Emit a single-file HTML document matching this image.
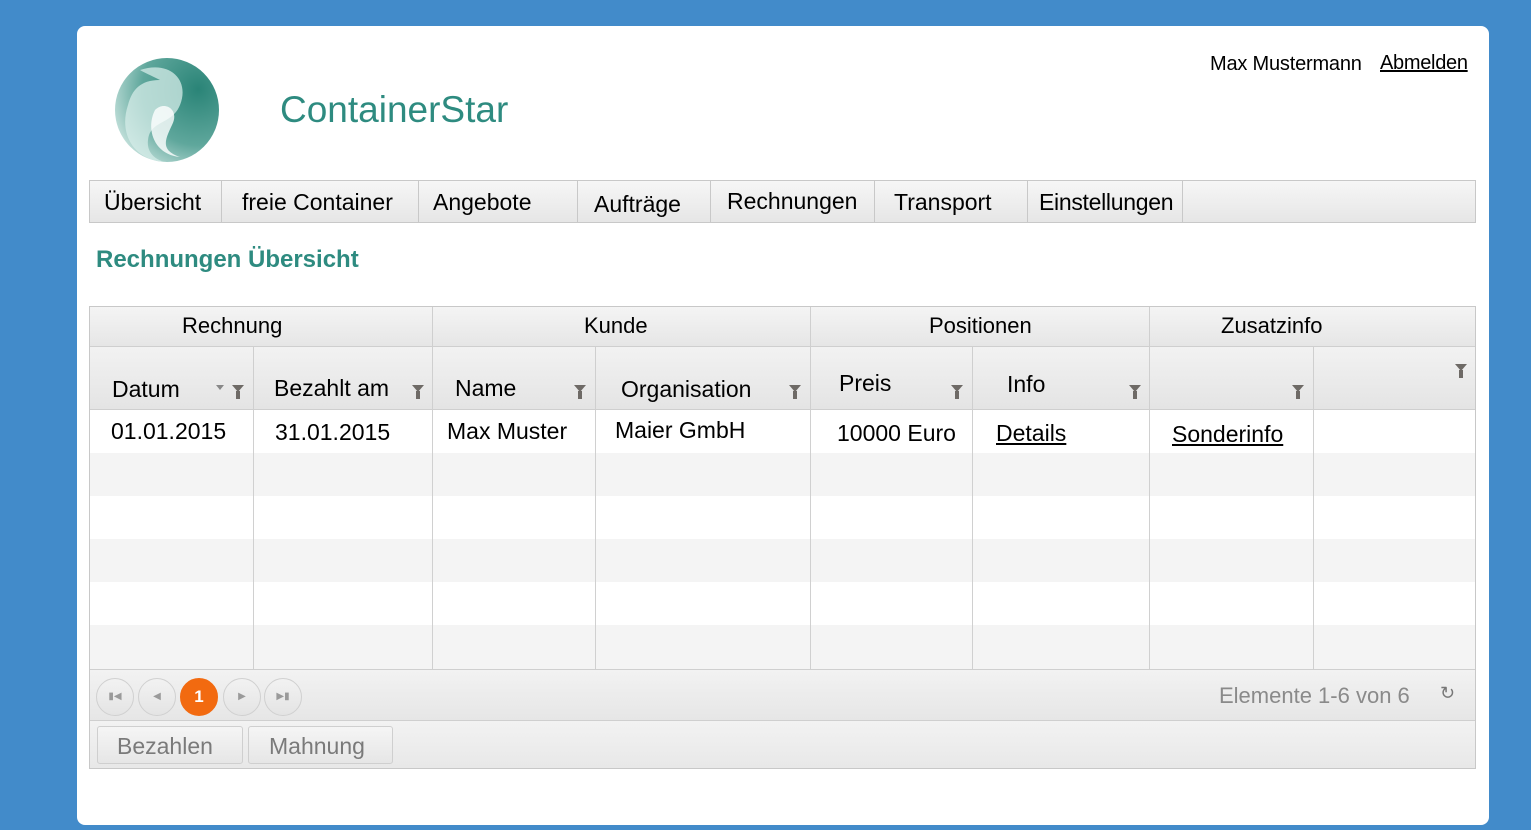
<!DOCTYPE html>
<html><head><meta charset="utf-8"><style>
*{margin:0;padding:0;box-sizing:border-box}
body{width:1531px;height:830px;background:#428bca;font-family:"Liberation Sans",Arial,sans-serif;position:relative;overflow:hidden;color:#000}
.a{position:absolute}
#card{left:77px;top:26px;width:1412px;height:799px;background:#fff;border-radius:8px}
.menu{left:89px;top:180px;width:1387px;height:43px;border:1px solid #c8c8c8;background:linear-gradient(#f6f6f6,#e6e6e6)}
.mi{position:absolute;top:0;height:41px;border-right:1px solid #c8c8c8;font-size:23px;line-height:42px;padding-left:14px}
.grid{left:89px;top:306px;width:1387px;height:463px;border:1px solid #c8c8c8}
.gh{position:absolute;top:0;height:40px;background:linear-gradient(#f4f4f4,#e6e6e6);border-bottom:1px solid #cfcfcf;border-right:1px solid #cfcfcf;font-size:22px;line-height:38px}
.ch{position:absolute;top:40px;height:63px;background:linear-gradient(#f2f2f2,#e4e4e4);border-bottom:1px solid #cfcfcf;border-right:1px solid #cfcfcf;font-size:23px;padding-left:22px}
.row{position:absolute;left:0;width:1385px;height:43px}
.vl{position:absolute;top:103px;width:1px;height:259px;background:#d0d0d0}
.cell{position:absolute;font-size:23px}
.f{position:absolute;width:0;height:0;border-left:6px solid transparent;border-right:6px solid transparent;border-top:7px solid #6e6a66}
.f:after{content:"";position:absolute;left:-2px;top:-1px;width:4px;height:8px;background:#6e6a66}
u{text-decoration:underline}
.pb{position:absolute;top:8px;width:38px;height:38px;border-radius:50%;border:1px solid #d0d0d0;background:linear-gradient(#f2f2f2,#e4e4e4);color:#9a9a9a;font-size:10px;text-align:center;line-height:36px}
.btn{position:absolute;top:5px;height:38px;border:1px solid #cfcfcf;border-radius:3px;background:linear-gradient(#f5f5f5,#e6e6e6);color:#7a7a7a;font-size:23px;line-height:38px}
</style></head><body>
<div id="card" class="a"></div>
<svg class="a" style="left:110px;top:55px" width="115" height="110" viewBox="0 0 115 110">
<defs><radialGradient id="g" cx="0.8" cy="0.3" r="0.9"><stop offset="0" stop-color="#2a8477"/><stop offset="0.6" stop-color="#5fa79c"/><stop offset="1" stop-color="#c9e4df"/></radialGradient></defs>
<circle cx="57" cy="55" r="52" fill="url(#g)"/>
<path d="M30 15 C60 5 80 25 70 50 C62 70 40 65 38 85 C36 100 50 108 60 107 C25 108 8 80 18 50 C22 35 30 25 50 25 C40 20 35 18 30 15Z" fill="#d6ece8" opacity="0.75"/>
<path d="M45 55 C55 45 70 55 62 70 C55 85 50 95 70 102 C45 100 35 75 45 55Z" fill="#fff" opacity="0.8"/>
</svg>
<div class="a" style="left:280px;top:89px;font-size:37px;color:#2e8b80">ContainerStar</div>
<div class="a" style="left:1210px;top:53px;font-size:20px;letter-spacing:-0.2px">Max Mustermann</div>
<div class="a" style="left:1380px;top:52px;font-size:20px;letter-spacing:-0.3px"><u>Abmelden</u></div>
<div class="a menu">
<div class="mi" style="left:0;width:132px">Übersicht</div>
<div class="mi" style="left:132px;width:197px;padding-left:20px">freie Container</div>
<div class="mi" style="left:329px;width:159px">Angebote</div>
<div class="mi" style="left:488px;width:133px;padding-left:16px;line-height:46px">Aufträge</div>
<div class="mi" style="left:621px;width:164px;padding-left:16px;line-height:40px">Rechnungen</div>
<div class="mi" style="left:785px;width:153px;padding-left:19px">Transport</div>
<div class="mi" style="left:938px;width:155px;padding-left:11px;letter-spacing:-0.3px">Einstellungen</div>
</div>
<div class="a" style="left:96px;top:246px;font-size:24px;font-weight:bold;color:#2e8b80">Rechnungen Übersicht</div>
<div class="a grid">
<div class="gh" style="left:0;width:343px;padding-left:92px">Rechnung</div>
<div class="gh" style="left:343px;width:378px;padding-left:151px">Kunde</div>
<div class="gh" style="left:721px;width:339px;padding-left:118px">Positionen</div>
<div class="gh" style="left:1060px;width:325px;border-right:0;padding-left:71px">Zusatzinfo</div>
<div class="ch" style="left:0;width:164px;padding-top:29px">Datum</div>
<div class="ch" style="left:164px;width:179px;padding-left:20px;padding-top:28px">Bezahlt am</div>
<div class="ch" style="left:343px;width:163px;padding-top:28px">Name</div>
<div class="ch" style="left:506px;width:215px;padding-left:25px;padding-top:29px">Organisation</div>
<div class="ch" style="left:721px;width:162px;padding-left:28px;padding-top:23px">Preis</div>
<div class="ch" style="left:883px;width:177px;padding-left:34px;padding-top:24px">Info</div>
<div class="ch" style="left:1060px;width:164px"></div>
<div class="ch" style="left:1224px;width:161px;border-right:0"></div>
<div class="a" style="left:126px;top:78px;width:0;height:0;border-left:4px solid transparent;border-right:4px solid transparent;border-top:5px solid #888"></div>
<div class="f" style="left:142px;top:78px"></div>
<div class="f" style="left:322px;top:78px"></div>
<div class="f" style="left:484px;top:78px"></div>
<div class="f" style="left:699px;top:78px"></div>
<div class="f" style="left:861px;top:78px"></div>
<div class="f" style="left:1039px;top:78px"></div>
<div class="f" style="left:1202px;top:78px"></div>
<div class="f" style="left:1365px;top:57px"></div>
<div class="row" style="top:103px;background:#fff"></div>
<div class="row" style="top:146px;background:#f4f4f4"></div>
<div class="row" style="top:189px;background:#fff"></div>
<div class="row" style="top:232px;background:#f4f4f4"></div>
<div class="row" style="top:275px;background:#fff"></div>
<div class="row" style="top:318px;background:#f4f4f4;height:44px"></div>
<div class="vl" style="left:163px"></div><div class="vl" style="left:342px"></div><div class="vl" style="left:505px"></div><div class="vl" style="left:720px"></div><div class="vl" style="left:882px"></div><div class="vl" style="left:1059px"></div><div class="vl" style="left:1223px"></div>
<div class="cell" style="left:21px;top:111px">01.01.2015</div>
<div class="cell" style="left:185px;top:112px">31.01.2015</div>
<div class="cell" style="left:357px;top:111px">Max Muster</div>
<div class="cell" style="left:525px;top:110px">Maier GmbH</div>
<div class="cell" style="left:747px;top:113px">10000 Euro</div>
<div class="cell" style="left:906px;top:113px"><u>Details</u></div>
<div class="cell" style="left:1082px;top:114px"><u>Sonderinfo</u></div>
<div class="a" style="left:0;top:362px;width:1385px;height:52px;background:linear-gradient(#f2f2f2,#e6e6e6);border-top:1px solid #cfcfcf;border-bottom:1px solid #cfcfcf">
<div class="pb" style="left:6px">▮◀</div>
<div class="pb" style="left:48px">◀</div>
<div class="pb" style="left:90px;background:#f26a10;border-color:#f26a10;color:#fff;font-size:17px;font-weight:bold">1</div>
<div class="pb" style="left:133px">▶</div>
<div class="pb" style="left:174px">▶▮</div>
<div class="a" style="left:1129px;top:13px;font-size:22px;color:#8a8a8a">Elemente 1-6 von 6</div>
<div class="a" style="left:1350px;top:13px;font-size:18px;color:#777">↻</div>
</div>
<div class="a" style="left:0;top:414px;width:1385px;height:47px;background:linear-gradient(#f2f2f2,#e8e8e8)">
<div class="btn" style="left:7px;width:146px;padding-left:19px">Bezahlen</div>
<div class="btn" style="left:158px;width:145px;padding-left:20px">Mahnung</div>
</div>
</div>
</body></html>
